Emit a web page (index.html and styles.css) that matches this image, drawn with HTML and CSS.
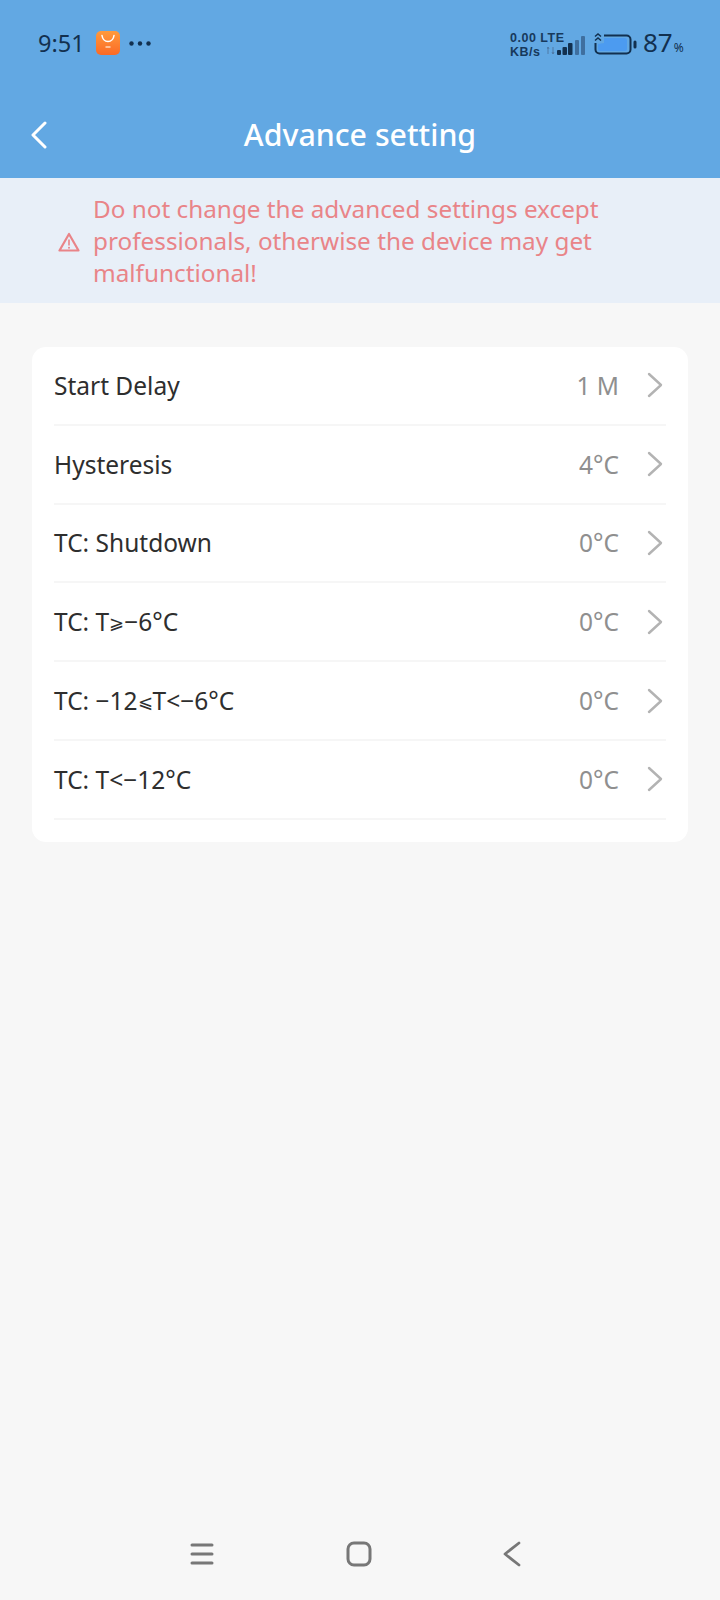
FILE: index.html
```html
<!DOCTYPE html>
<html lang="en">
<head>
<meta charset="utf-8">
<title>Advance setting</title>
<link rel="stylesheet" href="styles.css">
</head>
<body>
<div class="page">
  <header class="header">
    <div class="status">
      <div class="status-left">
        <span class="time">9:51</span>
        <svg class="app-icon" viewBox="0 0 24 24" width="24" height="24">
          <defs><linearGradient id="ag" x1="0" y1="0" x2="0" y2="1"><stop offset="0" stop-color="#ff9a3c"/><stop offset="1" stop-color="#fb6a26"/></linearGradient></defs>
          <rect width="24" height="24" rx="5" fill="url(#ag)"/>
          <path d="M6 4.500c.6 4 2.800 6 6 6s5.400-2 6-6" fill="none" stroke="#fff" stroke-width="1.500" stroke-linecap="round"/>
          <path d="M9.500 16h5" stroke="#ffd9bd" stroke-width="1.500"/>
        </svg>
        <svg class="dots" viewBox="0 0 22 5" width="22" height="5"><circle cx="2.500" cy="2.500" r="2.200" /><circle cx="11" cy="2.500" r="2.200" /><circle cx="19.500" cy="2.500" r="2.200" /></svg>
      </div>
      <div class="status-right">
        <div class="net"><span>0.00 LTE</span><span>KB/s</span></div>
        <svg class="signal" viewBox="0 0 40 20" width="40" height="20">
          <path d="M1 11v7M0 13l1-2 1 2M6 18v-7M5 16l1 2 1-2" stroke="#4f7aa6" stroke-width="1" fill="none"/>
          <rect x="10" y="14" width="4" height="5" rx="1" fill="#12304f"/>
          <rect x="15.500" y="11" width="4.500" height="8" rx="1" fill="#12304f"/>
          <rect x="21" y="7" width="4.500" height="12" rx="1" fill="#12304f"/>
          <rect x="28" y="4" width="4" height="15" rx="1" fill="#3f6f9f"/>
          <rect x="34" y="0" width="4" height="19" rx="1" fill="#3f6f9f"/>
        </svg>
        <svg class="battery" viewBox="0 0 44 22" width="44" height="22">
          <path d="M1 3.500 4 1l3 2.500M1 7.500 4 5l3 2.500" fill="none" stroke="#12304f" stroke-width="1.500"/>
          <path d="M1.500 10v6.500a4 4 0 0 0 4 4h27a4 4 0 0 0 4-4v-10a4 4 0 0 0-4-4H10" fill="none" stroke="#12304f" stroke-width="2"/>
          <path d="M10 5h21a2 2 0 0 1 2 2v9a2 2 0 0 1-2 2H6a2 2 0 0 1-2-2v-5l6-1z" fill="#4c9bf0"/>
          <rect x="39.500" y="7.500" width="3" height="8" rx="1.500" fill="#12304f"/>
        </svg>
        <span class="pct">87<small>%</small></span>
      </div>
    </div>
    <div class="titlebar">
      <svg class="back" viewBox="0 0 18 28" width="18" height="28"><path d="M15 2 3 14l12 12" fill="none" stroke="#fff" stroke-width="3" stroke-linecap="round" stroke-linejoin="round"/></svg>
      <h1 class="title">Advance setting</h1>
    </div>
  </header>

  <div class="notice">
    <svg class="warn" viewBox="0 0 22 20" width="22" height="20">
      <path d="M11 2 1.500 18.500h19z" fill="none" stroke="#e98488" stroke-width="2.200" stroke-linejoin="round"/>
      <path d="M11 7.500v6" stroke="#e98488" stroke-width="1.600"/>
      <circle cx="11" cy="15.700" r="1" fill="#e98488"/>
    </svg>
    <p class="notice-text">Do not change the advanced settings except professionals, otherwise the device may get malfunctional!</p>
  </div>

  <main class="card">
    <div class="row"><span class="label">Start Delay</span><span class="value">1 M</span><svg class="chev" viewBox="0 0 16 26" width="16" height="26"><path d="M2 2l12 11L2 24" fill="none" stroke="#b3b3b3" stroke-width="2.400" stroke-linecap="round" stroke-linejoin="round"/></svg></div>
    <div class="row"><span class="label">Hysteresis</span><span class="value">4°C</span><svg class="chev" viewBox="0 0 16 26" width="16" height="26"><path d="M2 2l12 11L2 24" fill="none" stroke="#b3b3b3" stroke-width="2.400" stroke-linecap="round" stroke-linejoin="round"/></svg></div>
    <div class="row"><span class="label">TC: Shutdown</span><span class="value">0°C</span><svg class="chev" viewBox="0 0 16 26" width="16" height="26"><path d="M2 2l12 11L2 24" fill="none" stroke="#b3b3b3" stroke-width="2.400" stroke-linecap="round" stroke-linejoin="round"/></svg></div>
    <div class="row"><span class="label">TC: T<span class="cmp">⩾</span>−6°C</span><span class="value">0°C</span><svg class="chev" viewBox="0 0 16 26" width="16" height="26"><path d="M2 2l12 11L2 24" fill="none" stroke="#b3b3b3" stroke-width="2.400" stroke-linecap="round" stroke-linejoin="round"/></svg></div>
    <div class="row"><span class="label">TC: −12<span class="cmp">⩽</span>T&lt;−6°C</span><span class="value">0°C</span><svg class="chev" viewBox="0 0 16 26" width="16" height="26"><path d="M2 2l12 11L2 24" fill="none" stroke="#b3b3b3" stroke-width="2.400" stroke-linecap="round" stroke-linejoin="round"/></svg></div>
    <div class="row"><span class="label">TC: T&lt;−12°C</span><span class="value">0°C</span><svg class="chev" viewBox="0 0 16 26" width="16" height="26"><path d="M2 2l12 11L2 24" fill="none" stroke="#b3b3b3" stroke-width="2.400" stroke-linecap="round" stroke-linejoin="round"/></svg></div>
  </main>

  <nav class="navbar">
    <svg viewBox="0 0 26 24" width="26" height="24"><path d="M3 3h20M3 12h20M3 21h20" fill="none" stroke="#777" stroke-width="3" stroke-linecap="round"/></svg>
    <svg viewBox="0 0 26 26" width="26" height="26"><rect x="2" y="2" width="22" height="22" rx="6" fill="none" stroke="#777" stroke-width="3"/></svg>
    <svg viewBox="0 0 20 28" width="20" height="28"><path d="M17 3 3 14l14 11" fill="none" stroke="#777" stroke-width="2.800" stroke-linecap="round" stroke-linejoin="round"/></svg>
  </nav>
</div>
</body>
</html>
```
FILE: styles.css
```css
* { box-sizing: border-box; }
html, body { margin: 0; padding: 0; }
body { font-family: "Noto Sans", "Open Sans", sans-serif; background: #f7f7f7; }
.page { width: 720px; height: 1600px; display: flex; flex-direction: column; background: #f7f7f7; }

.header { height: 178px; background: #62a8e3; flex: none; }
.status { height: 90px; padding: 27px 0 0 38px; display: flex; justify-content: space-between; align-items: flex-start; color: #12304f; }
.status-left { display: flex; align-items: center; height: 32px; }
.time { font-size: 23.500px; line-height: 32px; width: 58px; }
.dots { margin-left: 9px; fill: #12304f; }
.status-right { display: flex; align-items: center; height: 32px; width: 210px; margin-top: 2px; }
.net { display: flex; flex-direction: column; font-family: "Liberation Sans", sans-serif; font-weight: 700; font-size: 12.500px; line-height: 14.400px; letter-spacing: 0.5px; width: 37px; white-space: nowrap; color: #17395c; }
.signal { margin-top: 2px; }
.battery { margin-left: 7px; margin-top: -3px; }
.pct { font-size: 26px; line-height: 32px; margin-left: 5px; white-space: nowrap; }
.pct small { font-size: 12px; margin-left: 1px; }

.titlebar { height: 88px; display: flex; align-items: center; justify-content: center; position: relative; padding-top: 2px; }
.back { position: absolute; left: 30px; top: 31px; }
.title { margin: 0; font-size: 30.300px; line-height: 40px; font-weight: 500; color: #fff; }

.notice { height: 125px; background: #e8eff8; display: flex; align-items: center; padding: 0 108px 0 58px; flex: none; }
.warn { flex: none; margin-right: 13px; margin-top: 2px; }
.notice-text { margin: 0; font-size: 24.300px; line-height: 32px; color: #e98488; }

.card { margin: 44px 32px 0; padding: 0 22px 22px; background: #fff; border-radius: 14px; }
.row { height: 78.800px; display: flex; align-items: center; border-bottom: 2px solid #f6f6f6; }
.label { flex: 1; font-size: 24.500px; color: #2e2e2e; }
.cmp { font-size: 18px; vertical-align: 2px; }
.value { font-size: 24.500px; color: #8f8f8f; }
.chev { margin-left: 28px; margin-right: 3px; }

.navbar { margin-top: auto; height: 92px; padding: 0 198px 0 189px; display: flex; justify-content: space-between; align-items: center; }
```
